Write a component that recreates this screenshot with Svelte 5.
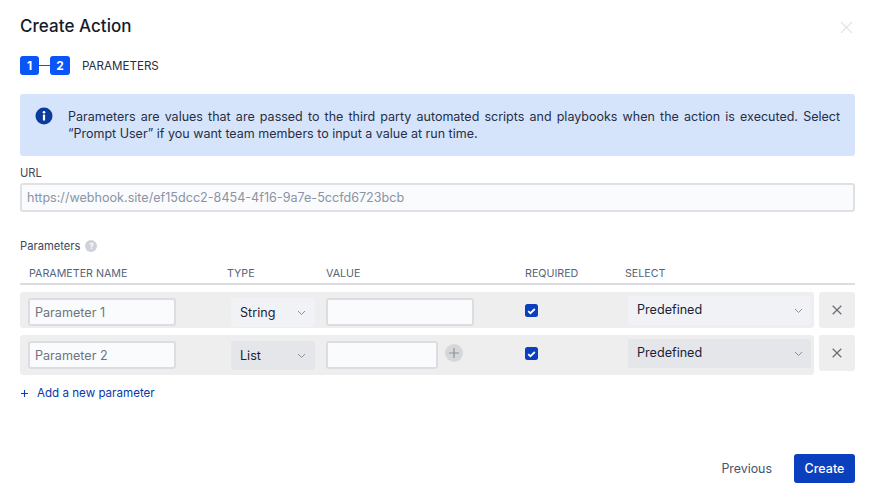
<script lang="ts">
let params = [
    { name: "Parameter 1", type: "String", list: false },
    { name: "Parameter 2", type: "List", list: true },
];
</script>

<div class="modal">
    <header class="head">
        <h1>Create Action</h1>
        <svg class="close" width="13" height="13" viewBox="0 0 13 13"><path d="M1 1l11 11M12 1L1 12" /></svg>
    </header>

    <div class="steps">
        <span class="step">1</span>
        <span class="link"></span>
        <span class="step two">2</span>
        <span class="step-name">PARAMETERS</span>
    </div>

    <div class="banner">
        <svg class="info" width="18" height="18" viewBox="0 0 18 18">
            <circle cx="9" cy="9" r="8.5" fill="#0a3a9c" />
            <circle cx="9" cy="5.2" r="1.3" fill="#fff" />
            <rect x="7.9" y="7.6" width="2.2" height="6" rx="0.6" fill="#fff" />
        </svg>
        <p>Parameters are values that are passed to the third party automated scripts and playbooks when the action is executed. Select “Prompt User” if you want team members to input a value at run time.</p>
    </div>

    <div class="label url-label">URL</div>
    <div class="url">https://webhook.site/ef15dcc2-8454-4f16-9a7e-5ccfd6723bcb</div>

    <div class="label params-label">
        Parameters
        <span class="help">?</span>
    </div>

    <div class="thead">
        <span class="c-name">PARAMETER NAME</span>
        <span class="c-type">TYPE</span>
        <span class="c-value">VALUE</span>
        <span class="c-req">REQUIRED</span>
        <span class="c-sel">SELECT</span>
    </div>

    {#each params as p}
        <div class="row-wrap" class:second={p.list}>
            <div class="row">
                <div class="field name">{p.name}</div>
                <div class="dropdown type">
                    <span>{p.type}</span>
                    <svg width="9" height="6" viewBox="0 0 9 6"><path d="M1 1l3.5 3.5L8 1" /></svg>
                </div>
                <div class="value-cell">
                    <div class="field value"></div>
                    {#if p.list}
                        <span class="plus">
                            <svg width="10" height="10" viewBox="0 0 10 10"><path d="M5 0v10M0 5h10" /></svg>
                        </span>
                    {/if}
                </div>
                <div class="check">
                    <svg width="9" height="8" viewBox="0 0 9 8"><path d="M1.2 4.2l2.2 2L7.8 2" /></svg>
                </div>
                <div class="dropdown select">
                    <span>Predefined</span>
                    <svg width="9" height="6" viewBox="0 0 9 6"><path d="M1 1l3.5 3.5L8 1" /></svg>
                </div>
            </div>
            <div class="remove">
                <svg width="10" height="10" viewBox="0 0 10 10"><path d="M0.7 0.7l8.6 8.6M9.3 0.7L0.7 9.3" /></svg>
            </div>
        </div>
    {/each}

    <div class="add">
        <svg width="7" height="7" viewBox="0 0 7 7"><path d="M3.5 0v7M0 3.5h7" /></svg>
        <span>Add a new parameter</span>
    </div>

    <footer class="foot">
        <span class="prev">Previous</span>
        <span class="create">Create</span>
    </footer>
</div>

<style>
    :global(body) {
        margin: 0;
        background: #fff;
    }

    .modal {
        width: 875px;
        height: 498px;
        box-sizing: border-box;
        padding: 15px 20px 0;
        font-family: Inter, "Liberation Sans", sans-serif;
        color: #1a2238;
        overflow: hidden;
    }

    .head {
        display: flex;
        justify-content: space-between;
        align-items: center;
        height: 22px;
    }

    h1 {
        margin: 0;
        font-size: 17px;
        font-weight: 500;
        letter-spacing: 0.05px;
        color: #141b2e;
    }

    .close {
        margin-right: 2px;
        margin-top: 2px;
    }

    .close path {
        stroke: #e4e5e8;
        stroke-width: 1.3;
        fill: none;
    }

    .steps {
        display: flex;
        align-items: center;
        height: 19px;
        margin-top: 19px;
    }

    .step {
        width: 19px;
        height: 19px;
        border-radius: 3px;
        background: #0a55f5;
        color: #fff;
        font-size: 12px;
        font-weight: 700;
        display: flex;
        align-items: center;
        justify-content: center;
    }

    .step.two {
        width: 20px;
    }

    .link {
        width: 11px;
        height: 1px;
        background: #0a55f5;
    }

    .step-name {
        margin-left: 12px;
        font-size: 11.6px;
        color: #262f45;
    }

    .banner {
        margin-top: 19px;
        height: 62px;
        box-sizing: border-box;
        padding: 14px 15px 0 15px;
        background: #d6e4fb;
        border-radius: 3px;
        display: flex;
        gap: 15px;
    }

    .info {
        flex: none;
        margin-top: -1px;
    }

    .banner p {
        margin: 0;
        font-size: 12.5px;
        line-height: 17px;
        text-align: justify;
        color: #262f45;
    }

    .label {
        font-size: 11.2px;
        font-weight: 400;
        color: #3c4860;
    }

    .url-label {
        margin-top: 10px;
        height: 17px;
        line-height: 14px;
    }

    .url {
        height: 29px;
        box-sizing: border-box;
        border: 2px solid #dfe1e6;
        border-radius: 3px;
        background: #fafbfc;
        padding: 0 5px;
        font-size: 12.6px;
        line-height: 25px;
        color: #8a94a6;
    }

    .params-label {
        display: flex;
        align-items: center;
        gap: 5px;
        margin-top: 27px;
        height: 14px;
    }

    .help {
        width: 12px;
        height: 12px;
        border-radius: 50%;
        background: #cfd2d8;
        color: #fff;
        font-size: 8px;
        font-weight: 700;
        display: flex;
        align-items: center;
        justify-content: center;
    }

    .thead {
        margin-top: 13px;
        height: 17px;
        border-bottom: 2px solid #dcdde3;
        display: flex;
        font-size: 10.7px;
        font-weight: 400;
        line-height: 16px;
        color: #56637a;
    }

    .thead span {
        flex: none;
    }

    .c-name { width: 198px; margin-left: 9px; }
    .c-type { width: 99px; }
    .c-value { width: 199px; }
    .c-req { width: 100px; }

    .row-wrap {
        display: flex;
        gap: 5px;
        margin-top: 7px;
        align-items: flex-start;
    }

    .row {
        width: 794px;
        height: 36px;
        flex: none;
        background: #eeeeef;
        border-radius: 3px;
        display: flex;
        position: relative;
    }

    .second .row {
        height: 40px;
    }

    .field {
        box-sizing: border-box;
        height: 28px;
        border: 2px solid #dcdde3;
        border-radius: 3px;
        background: #fafbfc;
        font-size: 12.6px;
        line-height: 26px;
        color: #6f747f;
    }

    .field.name {
        width: 148px;
        margin: 6px 0 0 8px;
        padding-left: 5px;
    }

    .second .field {
        margin-top: 6px;
    }

    .dropdown {
        box-sizing: border-box;
        border-radius: 3px;
        background: #f1f2f5;
        display: flex;
        align-items: center;
        justify-content: space-between;
        font-size: 12.6px;
        color: #1a2238;
    }

    .second .dropdown {
        background: #e5e6ea;
    }

    .dropdown svg {
        flex: none;
    }

    .dropdown path {
        stroke: #8a909c;
        stroke-width: 1;
        fill: none;
    }

    .type {
        width: 84px;
        height: 29px;
        margin: 6px 0 0 55px;
        padding: 0 9px 0 9px;
    }

    .value-cell {
        width: 199px;
        margin-left: 11px;
        display: flex;
    }

    .field.value {
        width: 148px;
        margin-top: 6px;
    }

    .second .field.value {
        width: 112px;
    }

    .plus {
        width: 18px;
        height: 18px;
        margin: 9px 0 0 7px;
        border-radius: 50%;
        background: #d6d7d9;
        display: flex;
        align-items: center;
        justify-content: center;
    }

    .plus path {
        stroke: #8d939c;
        stroke-width: 1.2;
        fill: none;
    }

    .check {
        width: 13px;
        height: 13px;
        margin-top: 12px;
        border-radius: 2.5px;
        background: #0a3fbd;
        display: flex;
        align-items: center;
        justify-content: center;
    }

    .check path {
        stroke: #fff;
        stroke-width: 1.8;
        fill: none;
    }

    .select {
        width: 183px;
        height: 29px;
        margin: 4px 0 0 90px;
        padding: 0 8px 2px 9px;
    }

    .select svg {
        margin-top: 3px;
    }

    .remove {
        width: 36px;
        height: 36px;
        flex: none;
        border-radius: 3px;
        background: #eeeeef;
        display: flex;
        align-items: center;
        justify-content: center;
    }

    .remove path {
        stroke: #6b6f76;
        stroke-width: 1.3;
        fill: none;
    }

    .add {
        display: flex;
        align-items: center;
        gap: 9px;
        margin-top: 11px;
        height: 14px;
        font-size: 11.6px;
        color: #0a38a8;
    }

    .add svg {
        margin-left: 1px;
    }

    .add path {
        stroke: #0a3fbd;
        stroke-width: 1.1;
        fill: none;
    }

    .foot {
        display: flex;
        justify-content: flex-end;
        align-items: center;
        gap: 22px;
        margin-top: 54px;
    }

    .prev {
        font-size: 12.4px;
        color: #45536c;
    }

    .create {
        width: 61px;
        height: 29px;
        border-radius: 3px;
        background: #0a3fbd;
        color: #fff;
        font-size: 12.5px;
        font-weight: 500;
        display: flex;
        align-items: center;
        justify-content: center;
    }
</style>
